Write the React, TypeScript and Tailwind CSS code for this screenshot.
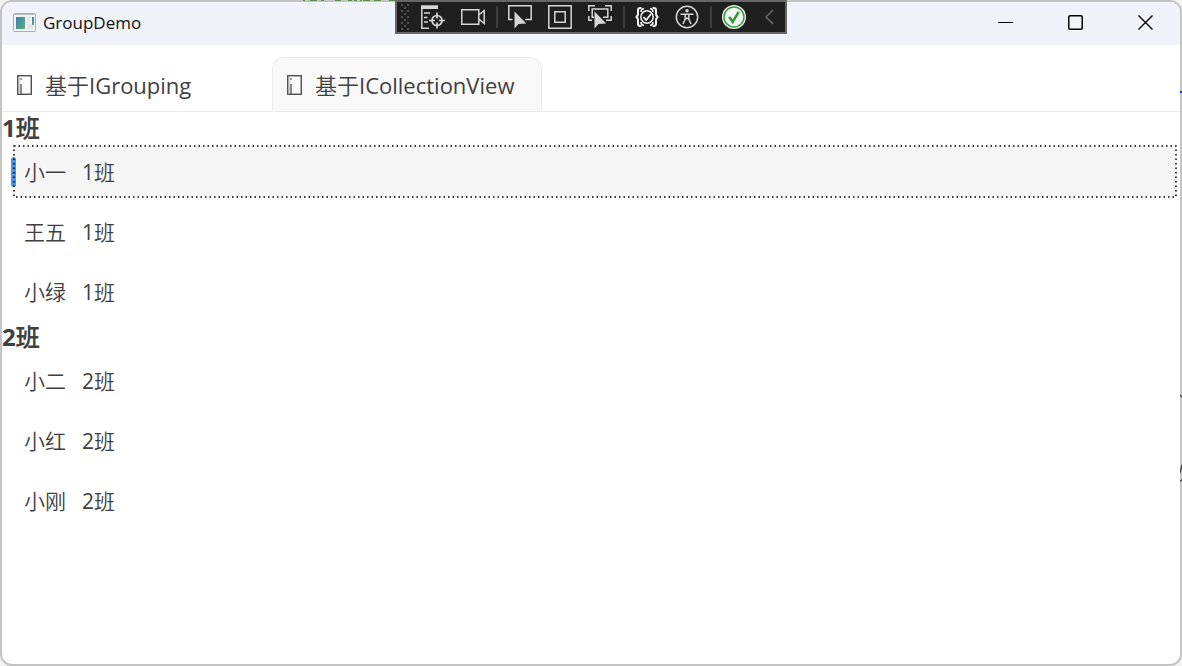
import React from 'react';
import clsx from 'clsx';

type Student = { name: string; className: string };

const groups: { title: string; students: Student[] }[] = [
  {
    title: '1班',
    students: [
      { name: '小一', className: '1班' },
      { name: '王五', className: '1班' },
      { name: '小绿', className: '1班' },
    ],
  },
  {
    title: '2班',
    students: [
      { name: '小二', className: '2班' },
      { name: '小红', className: '2班' },
      { name: '小刚', className: '2班' },
    ],
  },
];

const tabs = ['基于IGrouping', '基于ICollectionView'];

function AppIcon() {
  return (
    <svg width="23" height="19" viewBox="0 0 23 19" aria-hidden="true">
      <defs>
        <linearGradient id="pane" x1="0" y1="0" x2="1" y2="1">
          <stop offset="0" stopColor="#3f7fae" />
          <stop offset="1" stopColor="#5fae7c" />
        </linearGradient>
      </defs>
      <rect x="0.5" y="0.5" width="22" height="18" rx="1" fill="#f1f2f4" stroke="#a9adb5" />
      <path d="M1 1.5h21" stroke="#b9bdc6" />
      <rect x="3" y="4" width="9" height="12" fill="url(#pane)" />
      <rect x="14" y="4" width="3" height="6" fill="#e2e4e8" />
      <rect x="14" y="11" width="6" height="5" fill="#e2e4e8" />
      <rect x="19" y="4" width="2" height="8" fill="url(#pane)" />
    </svg>
  );
}

function MissingGlyph() {
  return (
    <svg width="15" height="20" viewBox="0 0 15 20" fill="none" aria-hidden="true">
      <rect x="0.75" y="0.75" width="13.5" height="18.5" stroke="#3f3f3f" strokeWidth="1.3" />
      <path d="M4 9v10" stroke="#4a4a4a" strokeWidth="1.3" />
      <path d="M2 2v17" stroke="#b0b0b0" />
      <path d="M3.3 4h1.4" stroke="#4a4a4a" strokeWidth="1.4" />
    </svg>
  );
}

function ToolButton({ label, children }: { label: string; children: React.ReactNode }) {
  return (
    <button type="button" aria-label={label} className="flex w-10 items-center justify-center">
      <svg width="24" height="24" viewBox="0 0 24 24" fill="none" stroke="#d6d6d6" strokeWidth="1.5">
        {children}
      </svg>
    </button>
  );
}

function Separator() {
  return (
    <div className="flex w-[7px] items-center justify-center">
      <div className="h-[22px] w-[2px] bg-[#3d3d3d]" />
    </div>
  );
}

const cursorPath = 'M6.5 6.5v17l4-4.6 7.8-.4z';

function DebugToolbar() {
  return (
    <div
      role="toolbar"
      className="absolute top-0 left-1/2 flex h-[34px] w-[392px] -translate-x-1/2 border-2 border-[#666] bg-[#1f1f1f]"
    >
      <svg width="16" height="30" className="shrink-0" aria-hidden="true">
        <defs>
          <pattern id="grip" x="4" y="2" width="6" height="6" patternUnits="userSpaceOnUse">
            <rect width="2" height="2" fill="#505050" />
            <rect x="3" y="3" width="2" height="2" fill="#505050" />
          </pattern>
        </defs>
        <rect x="4" y="2" width="8" height="26" fill="url(#grip)" />
      </svg>
      <ToolButton label="Live Visual Tree">
        <path d="M0 .3h17v3.7H0z" fill="#d6d6d6" stroke="none" />
        <path d="M.8 3v20.2H8M3 8h6M3 12.5h3.5M3 17h4" />
        <circle cx="16" cy="15.5" r="5" strokeWidth="1.7" />
        <path d="M16 7.5v6M16 17.5v6M8 15.5h6M18 15.5h6" strokeWidth="1.7" />
      </ToolButton>
      <ToolButton label="Hot Reload recording">
        <path d="M.8 4.8h17v14.4H.8zM17.8 10l5.4-4.5v13L17.8 14" />
      </ToolButton>
      <Separator />
      <ToolButton label="Select Element">
        <path d="M4.5 14.5H.8V.8h22.4v13.7h-6" />
        <path d={cursorPath} fill="#d6d6d6" stroke="none" />
      </ToolButton>
      <ToolButton label="Display Layout Adorners">
        <path d="M.8.8h22.4v22.4H.8zM6.8 6.8h10.4v10.4H6.8z" />
      </ToolButton>
      <ToolButton label="Track Focused Element">
        <path d="M.8 6V.8H7M17 .8h6.2V6M.8 11v4.2H4M23.2 11v4.2H18" />
        <path d="M6 12.2H4.2V4h15.6v8.2H15" />
        <path d={cursorPath} fill="#d6d6d6" stroke="none" />
      </ToolButton>
      <Separator />
      <ToolButton label="Binding Failures">
        <path
          d="M6.5 3H5.3Q3 3 3 5.3v3.2Q3 11.5.8 12 3 12.5 3 15.5v3.2Q3 21 5.3 21h1.2M17.5 3h1.2Q21 3 21 5.3v3.2q0 3 2.2 3.5-2.2.5-2.2 3.5v3.2Q21 21 18.7 21h-1.2"
          stroke="#f0f0f0"
          strokeWidth="2"
        />
        <path
          d="M9 3.5Q6 4 6 7M15 3.5q3 .5 3 3.5M9 20.5Q6 20 6 17M15 20.5q3-.5 3-3.5"
          stroke="#f0f0f0"
          strokeWidth="1.6"
        />
        <circle cx="12" cy="12" r="6.2" stroke="#f0f0f0" />
        <path d="m8.5 12 2.7 3 4.8-6" stroke="#f0f0f0" strokeWidth="1.8" />
      </ToolButton>
      <ToolButton label="Scan for Accessibility Issues">
        <circle cx="12" cy="12" r="10.7" />
        <circle cx="12" cy="5.8" r="1.8" fill="#d6d6d6" stroke="none" />
        <path d="M5.5 9.3h13M10.2 9.5V14L8 19M13.8 9.5V14L16 19M10.2 14.5 12 13l1.800 1.500" />
      </ToolButton>
      <Separator />
      <ToolButton label="Hot Reload">
        <circle cx="12" cy="12" r="12" fill="#f4f4f4" stroke="none" />
        <circle cx="12" cy="12" r="10" stroke="#2f9e3a" />
        <path d="m7.2 12 3.5 4.8 6-10" stroke="#2b9a35" strokeWidth="2.6" />
      </ToolButton>
      <button type="button" aria-label="Collapse" className="flex flex-1 items-center justify-center">
        <svg width="9" height="16" viewBox="0 0 9 16" fill="none" stroke="#6a6a6a" strokeWidth="1.5">
          <path d="M8 1 1 8l7 7" />
        </svg>
      </button>
    </div>
  );
}

function TitleBar() {
  return (
    <header className="flex h-[43px] bg-[#f0f3fa] pb-0.5">
      <div className="flex flex-1 items-center gap-[7px] pl-[11px]">
        <AppIcon />
        <h1 className="text-[17px] leading-6 text-[#111]">GroupDemo</h1>
      </div>
      <button type="button" aria-label="Minimize" className="flex w-[70px] items-center justify-center">
        <svg width="15" height="15" stroke="#000">
          <path d="M0 7.5h15" />
        </svg>
      </button>
      <button type="button" aria-label="Maximize" className="flex w-[70px] items-center justify-center">
        <svg width="15" height="15" fill="none" stroke="#000" strokeWidth="1.5">
          <rect x="0.75" y="0.75" width="13.5" height="13.5" rx="1.5" />
        </svg>
      </button>
      <button type="button" aria-label="Close" className="flex w-[70px] items-center justify-center">
        <svg width="15" height="15" stroke="#000" strokeWidth="1.4">
          <path d="m.5.5 14 14M14.5.5l-14 14" />
        </svg>
      </button>
    </header>
  );
}

function StudentRow({
  student,
  selected,
  onSelect,
}: {
  student: Student;
  selected: boolean;
  onSelect: () => void;
}) {
  return (
    <li className="h-[60px] pt-[5px] pr-[3px] pb-1 pl-[11px]">
      <button
        type="button"
        aria-pressed={selected}
        onClick={onSelect}
        className={clsx(
          'relative flex h-[51px] w-full items-center gap-4 pl-[11px] text-[21px] leading-7 text-[#404040] outline-none',
          selected && 'bg-[#f5f5f5]',
        )}
      >
        {selected && (
          <>
            <span className="absolute top-[11px] -left-[2px] h-[30px] w-[5px] rounded-full bg-[#4795e8]" />
            <svg className="absolute inset-0 size-full overflow-visible px-px" aria-hidden="true">
              <rect width="100%" height="100%" fill="none" stroke="#000" strokeWidth="1.5" strokeDasharray="1.5 3" />
            </svg>
          </>
        )}
        <span>{student.name}</span>
        <span>{student.className}</span>
      </button>
    </li>
  );
}

// Slivers of the editor behind the window that show along its border.
function BackdropSlivers() {
  return (
    <>
      <svg className="absolute top-0 left-[303px]" width="92" height="1" aria-hidden="true">
        <path d="M0 .5h2M7 .5h7M18 .5h3M32 .5h6M45 .5h4M51 .5h3M57 .5h2M60 .5h7M71 .5h7M86 .5h6" stroke="#5b8f4a" />
      </svg>
      <svg className="absolute top-[91px] right-0" width="2" height="400" aria-hidden="true">
        <path d="M0 1h2" stroke="#3030a8" strokeWidth="2" />
        <path d="M0 304l2 2M0 390l2-1M2 374l-2 8" stroke="#474747" strokeWidth="1.5" />
      </svg>
    </>
  );
}

export default function App() {
  const [activeTab, setActiveTab] = React.useState(1);
  const [selected, setSelected] = React.useState('小一');

  return (
    <div className="relative flex min-h-screen flex-col bg-[#f3f3f3] font-['Open_Sans','Noto_Sans_CJK_SC_DemiLight','Noto_Sans_CJK_SC_Light','Noto_Sans_CJK_SC',sans-serif]">
      <div className="flex flex-1 flex-col overflow-hidden rounded-xl border-2 border-[#c4c4c4] bg-white">
        <TitleBar />
        <div role="tablist" className="flex border-b border-[#ebebeb] pt-3">
          {tabs.map((tab, index) => (
            <button
              key={tab}
              type="button"
              role="tab"
              aria-selected={index === activeTab}
              onClick={() => setActiveTab(index)}
              className={clsx(
                'flex h-[54px] w-[270px] items-center gap-[13px] rounded-t-xl border border-b-0 pl-[14px] text-[22px] leading-7 text-[#404040]',
                index === activeTab ? 'border-[#ececec] bg-[#f9f9f9]' : 'border-transparent',
              )}
            >
              <MissingGlyph />
              <span>{tab}</span>
            </button>
          ))}
        </div>
        <main>
          {groups.map((group) => (
            <section key={group.title}>
              <h2 className="h-[29px] text-[24px] leading-8 font-bold text-[#404040]">{group.title}</h2>
              <ul>
                {group.students.map((student) => (
                  <StudentRow
                    key={student.name}
                    student={student}
                    selected={selected === student.name}
                    onSelect={() => setSelected(student.name)}
                  />
                ))}
              </ul>
            </section>
          ))}
        </main>
      </div>
      <BackdropSlivers />
      <DebugToolbar />
    </div>
  );
}
